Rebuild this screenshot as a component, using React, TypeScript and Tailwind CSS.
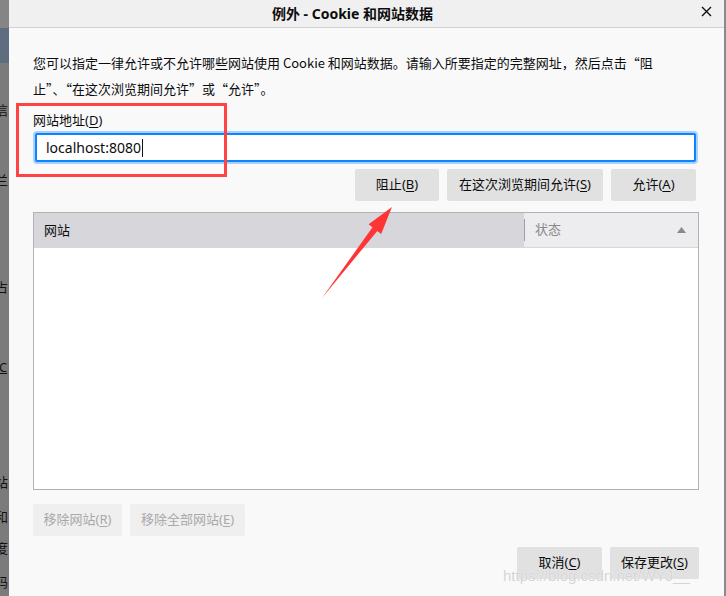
import React from "react";

const font = "font-['Noto_Sans','Noto_Sans_CJK_SC',sans-serif]";

function Key({ k }: { k: string }) {
  return (
    <>
      (<span className="underline underline-offset-2">{k}</span>)
    </>
  );
}

function Btn({
  children,
  w,
  disabled,
}: {
  children: React.ReactNode;
  w: string;
  disabled?: boolean;
}) {
  return (
    <div
      className={`flex h-[32px] items-center justify-center rounded-[2px] text-[13px] ${w} ${
        disabled ? "bg-[#efefef] text-[#a9a9ab]" : "bg-[#e1e1e2] text-[#0c0c0d]"
      }`}
    >
      {children}
    </div>
  );
}

function LeftStrip() {
  // fragments of the window behind the dialog, clipped at the dialog edge
  return (
    <div className="flex w-[9px] shrink-0 flex-col overflow-hidden bg-[#7b7b7b] text-[13px] leading-[16px] text-[#111]">
      <div className="h-[28px] shrink-0 bg-[#858585]" />
      <div className="h-[35px] shrink-0 bg-[#5f6d80]" />
      <span className="-ml-[5px] mt-[39px]">信</span>
      <span className="-ml-[5px] mt-[54px]">兰</span>
      <span className="-ml-[5px] mt-[91px]">占</span>
      <span className="-ml-[1px] mt-[64px] underline">C</span>
      <span className="-ml-[5px] mt-[99px]">站</span>
      <span className="-ml-[5px] mt-[19px]">和</span>
      <span className="-ml-[5px] mt-[15px]">度</span>
      <span className="-ml-[5px] mt-[18px]">码</span>
    </div>
  );
}

export default function App() {
  return (
    <div className={`relative flex h-[596px] w-[726px] overflow-hidden bg-[#7b7b7b] ${font}`}>
      <LeftStrip />

      <div className="flex flex-1 flex-col bg-[#f9f9fa]">
        {/* title bar */}
        <div className="relative flex h-[28px] shrink-0 items-center justify-center border-b border-[#d2d2d2] bg-[#f0f0f0] pr-[28px]">
          <span className="text-[14px] font-bold leading-[20px] text-[#0c0c0d]">例外 - Cookie 和网站数据</span>
          <svg className="absolute right-[12px] top-[6px]" width="11" height="11" viewBox="0 0 11 11">
            <path d="M1 1 L10 10 M10 1 L1 10" stroke="#111" strokeWidth="1.4" />
          </svg>
        </div>

        <div className="flex flex-col pl-[24px] pr-[25px] text-[#0c0c0d]">
          <p className="mt-[22px] font-['Noto_Sans_CJK_SC',sans-serif] text-[13px] leading-[26px]">
            您可以指定一律允许或不允许哪些网站使用 Cookie 和网站数据。请输入所要指定的完整网址，然后点击“阻
            <br />
            止”、“在这次浏览期间允许”或“允许”。
          </p>

          <div className="mt-[9px] text-[13px] leading-[18px]">
            网站地址<Key k="D" />
          </div>

          <div className="ml-[2px] mr-[3px] mt-[4px] flex h-[29px] items-center rounded-[2px] border-2 border-[#0a84ff] bg-white pl-[9px] text-[14px] shadow-[0_0_0_2px_#a8d1ff]">
            <span>localhost:8080</span>
            <span className="ml-[1px] h-[18px] w-px bg-[#111]" />
          </div>

          <div className="mt-[7px] flex justify-end gap-[8px] pr-[3px]">
            <Btn w="w-[84px]">
              阻止<Key k="B" />
            </Btn>
            <Btn w="w-[156px]">
              在这次浏览期间允许<Key k="S" />
            </Btn>
            <Btn w="w-[85px]">
              允许<Key k="A" />
            </Btn>
          </div>

          {/* site list */}
          <div className="mt-[11px] flex h-[278px] flex-col border border-[#b1b1b3] bg-white">
            <div className="flex h-[35px] shrink-0 text-[13px]">
              <div className="flex flex-1 items-center bg-[#d7d7db] pl-[10px]">网站</div>
              <div className="flex w-[174px] items-center border-b border-[#d7d7db] bg-[#ededf0] text-[#8a8a8c]">
                <span className="h-[22px] w-px bg-[#a0a0a2]" />
                <span className="ml-[10px] flex-1">状态</span>
                <svg className="mr-[12px]" width="9" height="6" viewBox="0 0 9 6">
                  <path d="M0 6 L4.5 0 L9 6 Z" fill="#8a8a8c" />
                </svg>
              </div>
            </div>
          </div>

          <div className="mt-[14px] flex gap-[8px]">
            <Btn w="w-[89px]" disabled>
              移除网站<Key k="R" />
            </Btn>
            <Btn w="w-[115px]" disabled>
              移除全部网站<Key k="E" />
            </Btn>
          </div>

          <div className="mt-[11px] flex justify-end gap-[8px]">
            <Btn w="w-[85px]">
              取消<Key k="C" />
            </Btn>
            <Btn w="w-[89px]">
              保存更改<Key k="S" />
            </Btn>
          </div>
        </div>
      </div>

      <div className="w-[2px] shrink-0 bg-[#8a8a8a]" />

      {/* annotations drawn over the screenshot */}
      <div className="pointer-events-none absolute left-[16px] top-[103px] h-[74px] w-[211px] border-[3px] border-[#ff4343]" />
      <svg className="pointer-events-none absolute left-0 top-0" width="726" height="596" viewBox="0 0 726 596">
        <polygon
          points="322,298 372.5,227.3 368.6,224.2 392,207 381.2,234 377.3,230.9"
          fill="#ff3535"
        />
      </svg>
      <div className="pointer-events-none absolute left-[503px] top-[566px] font-['Liberation_Sans',sans-serif] text-[15px] leading-[20px] text-[#d4d4d4] [text-shadow:0_0_1px_#ffffff]">
        https://blog.csdn.net/WYJ__
      </div>
    </div>
  );
}
